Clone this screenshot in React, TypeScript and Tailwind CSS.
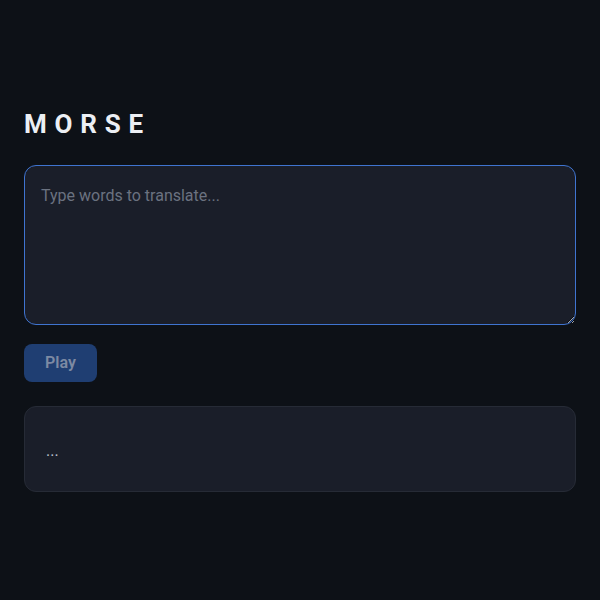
import React, { useState } from "react";

export default function App() {
    const [text, setText] = useState("");

    return (
        <div className="min-h-screen bg-[#0d1117] flex flex-col justify-center px-6 pt-[3px] font-['Roboto',sans-serif]">
            <div className="flex flex-col">
                <h1 className="text-[26px] font-bold tracking-[0.3em] text-[#eceff4] leading-none">MORSE</h1>
                <textarea
                    className="mt-[28px] h-[160px] w-full resize-y rounded-xl border border-[#3f74d0] bg-[#1a1e29] px-4 pt-[18px] pb-4 text-base text-[#c9d1d9] placeholder:text-[#6b7280] outline-none"
                    placeholder="Type words to translate..."
                    value={text}
                    onChange={(e) => setText(e.target.value)}
                />
                <button
                    type="button"
                    disabled={text === ""}
                    className="mt-[19px] h-[38px] w-[73px] rounded-lg bg-[#1f3e72] text-base font-semibold text-[#7d8aa3]"
                >
                    Play
                </button>
                <div className="mt-6 flex h-[86px] items-center rounded-xl border border-[#262b36] bg-[#1a1e29] px-[21px] pt-[4px] text-base text-[#b8bfcc]">
                    ...
                </div>
            </div>
        </div>
    );
}
